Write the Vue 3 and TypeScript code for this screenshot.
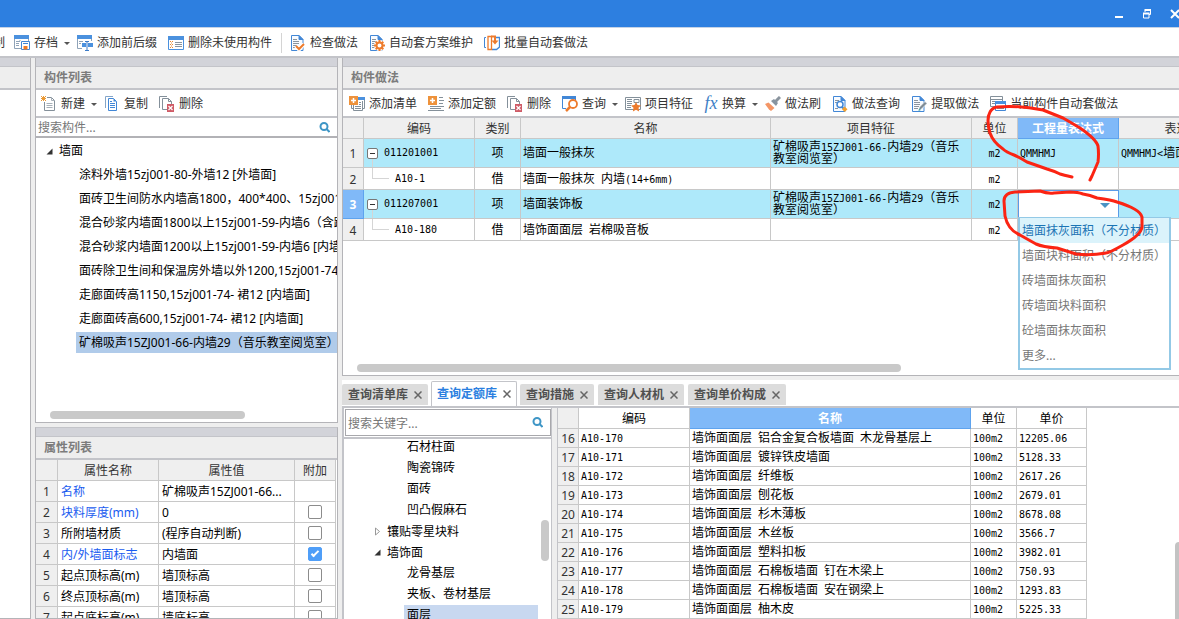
<script setup lang="ts">
import { ref } from 'vue'

interface Tool {
  label: string
  icon: string
  menu?: boolean
}

const docBlue = '<path d="M1.500 .5h7.500l4 4v11h-11.500z" fill="#f8fbff" stroke="#4287d6"/><path d="M9 .5v4h4z" fill="#4287d6" stroke="#4287d6"/>'
const docLines = '<path d="M3 4.500h4M3 6.500h6M3 8.500h6M3 10.500h5M3 12.500h4" stroke="#8a949e" fill="none"/>'
const plusBox = '<path d="M0 0h9v9h-9z" fill="#ee923b"/><path d="M4.500 2v5M2 4.500h5" stroke="#fff" stroke-width="1.500"/>'
const deleteDocs = '<path d="M.5 12V.5H8M3.500 13.500v-11h6l3 3v8z" fill="#fff" stroke="#84909a"/><path d="M9.500 2.500v3h3" fill="none" stroke="#84909a"/><path d="M8 8h7v8H8z" fill="#cf5b66"/><path d="M9.500 10l4 4M13.500 10l-4 4" stroke="#fff" stroke-width="1.200"/>'

const icons: Record<string, string> = {
  archive:
    '<path d="M0 0h15v4H0z" fill="#4b91de"/><path d="M.5 4v9.500H7M14.500 4v2M2 6.500h4M2 8.500h3M2 10.500h3M6 5v1" fill="none" stroke="#8fa3b8"/><path d="M7.500 6.500h8v8h-8z" fill="#fff" stroke="#4287d6"/><path d="M9 8.500h5" stroke="#4287d6"/><path d="M9.500 11h4v3.500h-4z" fill="#f07a24"/>',
  prefix:
    '<path d="M0 0h15v4H0z" fill="#4b91de"/><path d="M.5 4v9.500H5M14.500 4v2M2 6.500h4M2 8.500h2" fill="none" stroke="#8fa3b8"/><path d="M5 8h4v4H5zM11 8h5v4h-5z" fill="#4b91de"/><path d="M8 6.500h4M10 6.500v9M8 15.500h4" fill="none" stroke="#3c7bc8"/>',
  unused:
    '<path d="M.5 1.500h15v13H.5z" fill="#fff" stroke="#4b91de"/><path d="M0 1h16v4H0z" fill="#4b91de"/><path d="M2 6h1v1H2zM4 6h1v1H4zM3 7.500h1v1H3zM2 9h1v1H2zM4 9h1v1H4zM3 10.500h1v1H3zM2 12h1v1H2zM4 12h1v1H4z" fill="#ee8a2d"/><path d="M7 7.500h7M7 9.500h7M7 11.500h7" stroke="#8a949e"/>',
  check: docBlue + docLines + '<path d="M6 11l3 3.500 5-5.500" fill="none" stroke="#fff" stroke-width="4"/><path d="M6 11l3 3 5-5" fill="none" stroke="#ed7b2c" stroke-width="2"/>',
  gear: docBlue + docLines + '<circle cx="10.500" cy="10.500" r="5.500" fill="#fff"/><circle cx="10.500" cy="10.500" r="3" fill="#fff" stroke="#ed7b2c" stroke-width="2"/><path d="M10.500 5v2M10.500 14v2M5 10.500h2M14 10.500h2M6.700 6.700l1.300 1.300M13 13l1.300 1.300M6.700 14.300L8 13M13 8l1.300-1.300" stroke="#ed7b2c" stroke-width="2"/>',
  batch:
    '<path d="M2 2.500H.5v10H2" fill="none" stroke="#4287d6"/><path d="M11 2.500h4.500v9.500l-3 2.500H8" fill="none" stroke="#4287d6" stroke-width="1.300"/><path d="M4 1.500h3.500v13H4z" fill="#fff" stroke="#ed7b2c" stroke-width="1.300"/><path d="M7 1.500h4V6" fill="none" stroke="#ed7b2c" stroke-width="2"/><path d="M7.500 5.500h7l-3.500 4z" fill="#ed7b2c"/>',
  create:
    '<path d="M3.500 1.500h7l3 3v10h-10z" fill="#fff" stroke="#84909a"/><path d="M10.500 1.500v3h3M5.500 7.500h6M5.500 9.500h6M5.500 11.500h6" fill="none" stroke="#a7b0b8"/><path d="M0 0h6v6H0z" fill="#fff"/><path d="M0 0l5 5M5 0L0 5M2.500 0v5M0 2.500h5" stroke="#eb9a35"/>',
  copy:
    '<path d="M1.500 12V.5H9" fill="none" stroke="#84a5c8"/><path d="M4.500 2.500h5l3 3v9h-8z" fill="#fff" stroke="#4287d6"/><path d="M9.500 2.500v3h3z" fill="#4287d6"/><path d="M6 5.500h2M6 7.500h5M6 9.500h5M6 11.500h5" fill="none" stroke="#4287d6"/>',
  remove: deleteDocs,
  addList:
    '<path d="M9 1h7v3H9z" fill="#4b91de"/><path d="M15.500 4v8.500h-2M13.500 5v9.500H4.500V9M2.500 9v3.500h2M6 10.500h6M6 12.500h6M10 6.500h2M10 8.500h2" fill="none" stroke="#84909a"/>' + plusBox,
  addQuota: '<path d="M11 1.500h4M11 4.500h5M11 7.500h4M2 10.500h14M2 12.500h11M0 14.500h16" stroke="#84909a"/>' + plusBox,
  search:
    '<path d="M.5 2v10.500H4M.5 2h13v4" fill="none" stroke="#4287d6"/><path d="M0 0h14v3H0z" fill="#4287d6"/><circle cx="11" cy="8" r="4" fill="#fff" stroke="#ed7b2c" stroke-width="1.800"/><path d="M8 11l-4 4" stroke="#ed7b2c" stroke-width="2.500"/>',
  feature:
    '<path d="M.5 1.500h15v12H.5z" fill="#fff" stroke="#84909a"/><path d="M2 3.500h5M2 5.500h5M2 7.500h5M2 9.500h4M2 11.500h4M9 3.500h5v3H9z" fill="none" stroke="#84909a"/><path d="M11 6l1.500 3 3.500.4-2.500 2.300.6 3.800-3.100-1.700-3.100 1.700.6-3.800L6 9.400 9.500 9z" fill="#ed7b2c"/>',
  brush:
    '<path d="M15 1l-5 5" stroke="#8a949e" stroke-width="3"/><path d="M6 5l3-2 4 4-2 3z" fill="#8794a0"/><path d="M5 5.500l5.500 5.500-1.500 1-5.500-5z" fill="#fff"/><path d="M3.500 6.500l6 5.500-3.500 3-2-1.500L0 8z" fill="#f49666"/>',
  docQuery:
    docBlue + '<path d="M3 4.500h4M3 6.500h2M3 12.500h3" stroke="#8a949e"/><circle cx="8" cy="8.500" r="3" fill="#fff" stroke="#4287d6" stroke-width="1.500"/><path d="M10 11l2 2" stroke="#4287d6" stroke-width="2"/><path d="M12.500 10.500l3 2.700-2.700 2.800-2.800-2.800z" fill="#f4a02c"/>',
  extract:
    docBlue + docLines + '<path d="M7.500 14.500l1-3.500 5.500-5.500 2 2L10.500 13z" fill="#7e8b95" stroke="#fff" stroke-width=".6"/><path d="M7.500 15l.7-2.500 1.800 1.600z" fill="#41a7a5"/>',
  auto:
    '<path d="M.5 .5h12v10H.5zM.5 3.500h12" fill="#fff" stroke="#84909a"/><path d="M2 5.500h4M2 7.500h3" stroke="#84909a"/><path d="M5.500 5.500h10v9h-10z" fill="#fff" stroke="#4287d6"/><path d="M5 5h11v3H5z" fill="#4b91de"/><path d="M7 10.500h7M7 12.500h7" stroke="#84909a"/>',
}

const mainTools: Tool[] = [
  { label: '存档', icon: 'archive', menu: true },
  { label: '添加前后缀', icon: 'prefix' },
  { label: '删除未使用构件', icon: 'unused' },
]
const schemeTools: Tool[] = [
  { label: '检查做法', icon: 'check' },
  { label: '自动套方案维护', icon: 'gear' },
  { label: '批量自动套做法', icon: 'batch' },
]
const listTools: Tool[] = [
  { label: '新建', icon: 'create', menu: true },
  { label: '复制', icon: 'copy' },
  { label: '删除', icon: 'remove' },
]
const methodTools: Tool[] = [
  { label: '添加清单', icon: 'addList' },
  { label: '添加定额', icon: 'addQuota' },
  { label: '删除', icon: 'remove' },
  { label: '查询', icon: 'search', menu: true },
  { label: '项目特征', icon: 'feature' },
  { label: '换算', icon: 'fx', menu: true },
  { label: '做法刷', icon: 'brush' },
  { label: '做法查询', icon: 'docQuery' },
  { label: '提取做法', icon: 'extract' },
  { label: '当前构件自动套做法', icon: 'auto' },
]

const components = [
  '涂料外墙15zj001-80-外墙12 [外墙面]',
  '面砖卫生间防水内墙高1800，400*400、15zj001-59-内墙',
  '混合砂浆内墙面1800以上15zj001-59-内墙6（含踢脚）',
  '混合砂浆内墙面1200以上15zj001-59-内墙6 [内墙面]',
  '面砖除卫生间和保温房外墙以外1200,15zj001-74-内墙',
  '走廊面砖高1150,15zj001-74- 裙12 [内墙面]',
  '走廊面砖高600,15zj001-74- 裙12 [内墙面]',
  '矿棉吸声15ZJ001-66-内墙29（音乐教室阅览室）',
]
const selectedComponent = ref(7)

interface Property {
  name: string
  value: string
  key?: boolean
  extra?: boolean
}
const properties = ref<Property[]>([
  { name: '名称', value: '矿棉吸声15ZJ001-66...', key: true },
  { name: '块料厚度(mm)', value: '0', key: true, extra: false },
  { name: '所附墙材质', value: '(程序自动判断)', extra: false },
  { name: '内/外墙面标志', value: '内墙面', key: true, extra: true },
  { name: '起点顶标高(m)', value: '墙顶标高', extra: false },
  { name: '终点顶标高(m)', value: '墙顶标高', extra: false },
  { name: '起点底标高(m)', value: '墙底标高', extra: false },
])

const methods = [
  { code: '011201001', parent: true, type: '项', name: '墙面一般抹灰', feature: '矿棉吸声15ZJ001-66-内墙29（音乐教室阅览室）', expr: 'QMMHMJ', note: 'QMMHMJ<墙面抹灰面积（不分材质）>' },
  { code: 'A10-1', parent: false, type: '借', name: '墙面一般抹灰 内墙(14+6mm)', feature: '', expr: '', note: '' },
  { code: '011207001', parent: true, type: '项', name: '墙面装饰板', feature: '矿棉吸声15ZJ001-66-内墙29（音乐教室阅览室）', expr: '', note: '' },
  { code: 'A10-180', parent: false, type: '借', name: '墙饰面面层 岩棉吸音板', feature: '', expr: '', note: '' },
]
const editingRow = 2
const expressions = ['墙面抹灰面积（不分材质）', '墙面块料面积（不分材质）', '砖墙面抹灰面积', '砖墙面块料面积', '砼墙面抹灰面积', '更多...']
const activeExpression = ref(0)

const tabs = ['查询清单库', '查询定额库', '查询措施', '查询人材机', '查询单价构成']
const activeTab = ref(1)

const library = [
  { label: '石材柱面', level: 2 },
  { label: '陶瓷锦砖', level: 2 },
  { label: '面砖', level: 2 },
  { label: '凹凸假麻石', level: 2 },
  { label: '镶贴零星块料', level: 1, open: false },
  { label: '墙饰面', level: 1, open: true },
  { label: '龙骨基层', level: 2 },
  { label: '夹板、卷材基层', level: 2 },
  { label: '面层', level: 2 },
]
const selectedLibrary = ref(8)

const quotas: [string, string, string][] = [
  ['A10-170', '墙饰面面层 铝合金复合板墙面 木龙骨基层上', '12205.06'],
  ['A10-171', '墙饰面面层 镀锌铁皮墙面', '5128.33'],
  ['A10-172', '墙饰面面层 纤维板', '2617.26'],
  ['A10-173', '墙饰面面层 刨花板', '2679.01'],
  ['A10-174', '墙饰面面层 杉木薄板', '8678.08'],
  ['A10-175', '墙饰面面层 木丝板', '3566.7'],
  ['A10-176', '墙饰面面层 塑料扣板', '3982.01'],
  ['A10-177', '墙饰面面层 石棉板墙面 钉在木梁上', '750.93'],
  ['A10-178', '墙饰面面层 石棉板墙面 安在钢梁上', '1293.83'],
  ['A10-179', '墙饰面面层 柚木皮', '5225.33'],
]

// Splits a string into Latin and Chinese runs, so that Latin text takes half-width cells.
function runs(text: string): { text: string; latin: boolean }[] {
  return (text.match(/[\x20-\x7e]+|[^\x20-\x7e]+/g) ?? []).map((part) => ({
    text: part,
    latin: /^[\x20-\x7e]/.test(part),
  }))
}
</script>

<template>
  <div class="app">
    <header class="titlebar">
      <button type="button" class="win" aria-label="最小化">
        <svg width="10" height="10"><path d="M1 8h8" stroke="#fff" stroke-width="2" /></svg>
      </button>
      <button type="button" class="win" aria-label="还原">
        <svg width="10" height="10"><path d="M3 3V1.500h5.500v4H7M1.500 4.500H7v4.500H1.500z" fill="none" stroke="#fff" /><path d="M2.500 1h6.500M1 4.500h6.500" stroke="#fff" stroke-width="2" /></svg>
      </button>
      <button type="button" class="win" aria-label="关闭">
        <svg width="10" height="10"><path d="M1 1l8 8M9 1L1 9" stroke="#fff" stroke-width="2" /></svg>
      </button>
    </header>

    <nav class="toolbar main-toolbar">
      <button type="button" class="tool cut">复制</button>
      <button v-for="t in mainTools" :key="t.label" type="button" class="tool" :class="{ menu: t.menu }">
        <svg class="icon" viewBox="0 0 16 16" v-html="icons[t.icon]"></svg>{{ t.label }}<i v-if="t.menu" class="caret"></i>
      </button>
      <span class="separator"></span>
      <button v-for="t in schemeTools" :key="t.label" type="button" class="tool">
        <svg class="icon" viewBox="0 0 16 16" v-html="icons[t.icon]"></svg>{{ t.label }}
      </button>
    </nav>

    <main class="workspace">
      <section class="panel edge">
        <div class="strip"></div>
        <div class="panel-title"></div>
      </section>

      <div class="column">
        <section class="panel grow">
          <div class="strip"></div>
          <h2 class="panel-title">构件列表</h2>
          <div class="toolbar">
            <button v-for="t in listTools" :key="t.label" type="button" class="tool" :class="{ menu: t.menu }">
              <svg class="icon" viewBox="0 0 16 16" v-html="icons[t.icon]"></svg>{{ t.label }}<i v-if="t.menu" class="caret"></i>
            </button>
          </div>
          <label class="search">
            <input type="text" placeholder="搜索构件..." aria-label="搜索构件" />
            <svg class="lens" viewBox="0 0 11 11"><circle cx="5" cy="4.500" r="3.500" /><path d="M7.500 7l3 3" /></svg>
          </label>
          <div class="tree">
            <div class="tree-root"><svg class="twisty" viewBox="0 0 7 7"><path d="M6.500 .5v6h-6z" fill="#333" /></svg>墙面</div>
            <ul>
              <li v-for="(c, i) in components" :key="c" :class="{ selected: i === selectedComponent }" @click="selectedComponent = i">{{ c }}</li>
            </ul>
          </div>
          <div class="hscroll list-scroll"><span></span></div>
        </section>

        <section class="panel properties">
          <div class="strip"></div>
          <h2 class="panel-title">属性列表</h2>
          <table class="grid prop-grid">
            <colgroup><col class="p-no" /><col class="p-name" /><col /><col class="p-add" /></colgroup>
            <thead>
              <tr><th></th><th>属性名称</th><th>属性值</th><th>附加</th></tr>
            </thead>
            <tbody>
              <tr v-for="(p, i) in properties" :key="p.name">
                <th>{{ i + 1 }}</th>
                <td :class="{ key: p.key }">{{ p.name }}</td>
                <td>{{ p.value }}</td>
                <td class="center"><input v-if="p.extra !== undefined" v-model="p.extra" type="checkbox" :aria-label="p.name + ' 附加'" /></td>
              </tr>
            </tbody>
          </table>
        </section>
      </div>

      <div class="column right">
        <section class="panel grow">
          <div class="strip"></div>
          <h2 class="panel-title">构件做法</h2>
          <div class="toolbar method-toolbar">
            <button v-for="t in methodTools" :key="t.label" type="button" class="tool" :class="{ menu: t.menu }">
              <span v-if="t.icon === 'fx'" class="icon fx" aria-hidden="true">fx</span>
              <svg v-else class="icon" viewBox="0 0 16 16" v-html="icons[t.icon]"></svg>{{ t.label }}<i v-if="t.menu" class="caret"></i>
            </button>
          </div>
          <div class="grid-area">
            <table class="grid method-grid">
              <colgroup>
                <col class="m-no" /><col class="m-code" /><col class="m-unit" /><col class="m-name" /><col class="m-feature" /><col class="m-unit" /><col class="m-expr" /><col class="m-note" />
              </colgroup>
              <thead>
                <tr><th></th><th>编码</th><th>类别</th><th>名称</th><th>项目特征</th><th>单位</th><th class="current">工程量表达式</th><th>表达式说明</th></tr>
              </thead>
              <tbody>
                <tr v-for="(m, i) in methods" :key="m.code" :class="{ parent: m.parent }">
                  <th :class="{ current: i === editingRow }">{{ i + 1 }}</th>
                  <td class="code">
                    <div class="node">
                      <button v-if="m.parent" type="button" class="toggle" aria-label="折叠"></button>
                      <span v-else class="elbow"></span>
                      <span class="latin">{{ m.code }}</span>
                    </div>
                  </td>
                  <td class="center">{{ m.type }}</td>
                  <td><span v-for="(r, k) in runs(m.name)" :key="k" :class="{ latin: r.latin }">{{ r.text }}</span></td>
                  <td class="feature"><span v-for="(r, k) in runs(m.feature)" :key="k" :class="{ latin: r.latin }">{{ r.text }}</span></td>
                  <td class="center"><span class="latin">m2</span></td>
                  <td v-if="i === editingRow" class="editor">
                    <select aria-label="工程量表达式"><option></option></select>
                    <ul class="popup" role="listbox" aria-label="工程量表达式选项">
                      <li v-for="(e, k) in expressions" :key="e" role="option" :aria-selected="k === activeExpression" :class="{ active: k === activeExpression }" @mouseenter="activeExpression = k">{{ e }}</li>
                    </ul>
                  </td>
                  <td v-else><span class="latin">{{ m.expr }}</span></td>
                  <td><span v-for="(r, k) in runs(m.note)" :key="k" :class="{ latin: r.latin }">{{ r.text }}</span></td>
                </tr>
              </tbody>
            </table>
          </div>
          <div class="hscroll method-scroll"><span></span></div>
        </section>

        <section class="query">
          <div class="tabs" role="tablist">
            <div v-for="(t, i) in tabs" :key="t" class="tab" :class="{ active: i === activeTab }">
              <button type="button" role="tab" :aria-selected="i === activeTab" @click="activeTab = i">{{ t }}</button>
              <button type="button" class="close" aria-label="关闭标签"><svg viewBox="0 0 8 8"><path d="M.5 .5l7 7M7.500 .5l-7 7" /></svg></button>
            </div>
          </div>
          <div class="query-body">
            <div class="library">
              <label class="search boxed">
                <input type="text" placeholder="搜索关键字..." aria-label="搜索关键字" />
                <svg class="lens" viewBox="0 0 11 11"><circle cx="5" cy="4.500" r="3.500" /><path d="M7.500 7l3 3" /></svg>
              </label>
              <div class="library-body">
                <ul>
                  <li v-for="(n, i) in library" :key="n.label" :class="{ branch: n.level === 1, selected: i === selectedLibrary }" @click="selectedLibrary = i">
                    <svg v-if="n.level === 1" class="twisty" viewBox="0 0 7 9"><path v-if="n.open" d="M6.500 1.500v6h-6z" fill="#333" /><path v-else d="M1.500 1l4 3.500-4 3.500z" fill="#fff" stroke="#999" /></svg>{{ n.label }}
                  </li>
                </ul>
                <div class="vscroll"><span></span></div>
              </div>
            </div>
            <div class="results">
              <table class="grid quota-grid">
                <colgroup><col class="q-no" /><col class="q-code" /><col class="q-name" /><col class="q-unit" /><col class="q-price" /></colgroup>
                <thead>
                  <tr><th></th><th>编码</th><th class="current">名称</th><th>单位</th><th>单价</th></tr>
                </thead>
                <tbody>
                  <tr v-for="(q, i) in quotas" :key="q[0]">
                    <th>{{ i + 16 }}</th>
                    <td><span class="latin">{{ q[0] }}</span></td>
                    <td><span v-for="(r, k) in runs(q[1])" :key="k" :class="{ latin: r.latin }">{{ r.text }}</span></td>
                    <td><span class="latin">100m2</span></td>
                    <td><span class="latin">{{ q[2] }}</span></td>
                  </tr>
                </tbody>
              </table>
              <div class="page-scroll"></div>
            </div>
          </div>
        </section>
      </div>
    </main>

    <svg class="ink" viewBox="980 100 170 160" aria-hidden="true">
      <path d="M1072 177Q1063 175 1060 174Q1054 171 1047 169L1027 162Q1019 157 1014 155Q1006 152 1003 149Q993 142 990 133Q986 119 990 112Q992 108 997 107Q1018 105 1043 110Q1053 114 1063 118Q1070 122 1080 128Q1096 139 1098 146Q1099 154 1098 162L1092 176L1090 180" />
      <path d="M1004 201Q1004 193 1015 192L1040 191Q1048 194 1054 193L1070 192Q1078 192 1083 194Q1090 195 1097 198Q1112 200 1117 202Q1140 209 1142 217V227Q1141 235 1123 245Q1109 253 1106 253Q1090 256 1076 254L1057 248Q1043 247 1036 244L1020 235Q1008 230 1005 216Z" />
    </svg>
  </div>
</template>

<style>
body {
  overflow: hidden;
}
</style>

<style scoped>
.app {
  position: relative;
  display: flex;
  flex-direction: column;
  height: 100vh;
  overflow: hidden;
  background: #eee;
  color: #000;
  font: 12px/16px "Noto Sans", "Noto Sans CJK SC", sans-serif;
}
.app *,
.app *::after {
  box-sizing: border-box;
}
button,
input,
select {
  font: inherit;
  color: inherit;
  border: 0;
  padding: 0;
  margin: 0;
  background: none;
}
ul,
h2 {
  list-style: none;
  margin: 0;
  padding: 0;
}
.titlebar {
  flex: none;
  display: flex;
  justify-content: flex-end;
  height: 28px;
  background: #2d7fe0;
  border-bottom: 1px solid #c5d3e6;
}
.win {
  width: 28px;
  flex: none;
}
.win:last-child {
  margin-right: -10px;
}
.win svg {
  display: block;
  margin: auto;
}
.toolbar {
  flex: none;
  display: flex;
  align-items: center;
  gap: 1px;
  height: 28px;
  padding-top: 2px;
  background: #fff;
  border-bottom: 2px solid #c3c4c9;
  overflow: hidden;
}
.main-toolbar {
  height: 30px;
}
.method-toolbar {
  padding-left: 1px;
}
.tool {
  flex: none;
  display: flex;
  align-items: center;
  gap: 4px;
  height: 22px;
  padding: 0 5px;
  color: #333;
  white-space: nowrap;
}
.tool.menu {
  padding-right: 1px;
}
.tool.cut {
  width: 8px;
  padding: 0 3px 0 0;
  justify-content: flex-end;
}
.icon {
  flex: none;
  width: 16px;
  height: 16px;
}
.fx {
  width: 14px;
  color: #3f7fc6;
  font: italic 18px/14px "Liberation Serif", serif;
}
.caret {
  margin-left: 2px;
  border: 3px solid transparent;
  border-top-color: #555;
  border-bottom: 0;
}
.separator {
  width: 1px;
  height: 20px;
  margin: 0 2px 0 3px;
  background: #d4d4d4;
}
.workspace {
  flex: 1;
  min-height: 0;
  display: grid;
  grid-template-columns: 31px 303px minmax(0, 1fr);
  grid-template-rows: minmax(0, 1fr);
  gap: 4px;
}
.column {
  display: flex;
  flex-direction: column;
  gap: 4px;
  min-height: 0;
}
.panel {
  display: flex;
  flex-direction: column;
  min-height: 0;
  background: #fff;
  border: 1px solid #b4b4b8;
  border-top: 0;
}
.edge {
  border-left: 0;
}
.right .panel {
  border-right: 0;
}
.grow {
  flex: 1;
}
.strip {
  flex: none;
  height: 9px;
  background: #d2d3d9;
  border-bottom: 1px solid #c3c4c9;
}
.panel-title {
  flex: none;
  height: 23px;
  padding-left: 8px;
  background: #eee;
  border-bottom: 2px solid #c3c4c9;
  color: #7c7c7c;
  font-size: 12px;
  line-height: 22px;
}
.search {
  flex: none;
  display: flex;
  align-items: center;
  height: 20px;
  padding: 0 7px 0 2px;
  border-bottom: 2px solid #b2b2b6;
}
.search input {
  flex: 1;
  min-width: 0;
  padding-top: 2px;
  outline: 0;
}
.search input::placeholder {
  color: #777;
  opacity: 1;
}
.lens {
  width: 11px;
  height: 11px;
  fill: none;
  stroke: #3f96c6;
  stroke-width: 2;
}
.tree {
  flex: 1;
  min-height: 0;
  overflow: hidden;
}
.tree-root {
  display: flex;
  align-items: center;
  height: 24px;
  padding: 2px 0 0 10px;
  gap: 6px;
}
.twisty {
  flex: none;
  width: 7px;
  height: 9px;
}
.tree li {
  height: 21px;
  margin: 2px 0 3px 40px;
  padding-left: 3px;
  line-height: 22px;
  white-space: nowrap;
  overflow: hidden;
}
.tree li.selected {
  background: #b0cbea;
}
.hscroll {
  flex: none;
  height: 11px;
}
.hscroll span {
  display: block;
  height: 8px;
  border-radius: 4px;
  background: #c9c9c9;
}
.list-scroll {
  padding: 0 92px 0 14px;
}
.method-scroll {
  padding: 0 278px 0 14px;
}
.properties {
  flex: none;
  height: 192px;
  overflow: hidden;
  border-top: 1px solid #c3c4c9;
}
.grid {
  table-layout: fixed;
  border-collapse: separate;
  border-spacing: 0;
}
.grid th,
.grid td {
  padding: 0;
  border: solid #c8c8c8;
  border-width: 0 1px 1px 0;
  white-space: nowrap;
  overflow: hidden;
  line-height: 14px;
}
.grid td {
  padding-left: 2px;
}
.grid th {
  padding-top: 2px;
  background: #efefef;
  color: #333;
  font-weight: 400;
  text-align: center;
}
.grid th.current {
  background: #80b9f8;
  border-color: #5ea3ee;
  color: #fff;
  font-weight: 700;
}
.grid .center {
  padding-left: 0;
  text-align: center;
}
.prop-grid {
  width: 100%;
  padding-right: 1px;
}
.p-no { width: 22px; }
.p-name { width: 101px; }
.p-add { width: 41px; }
.prop-grid tr {
  height: 21px;
}
.prop-grid td {
  padding-left: 3px;
}
.prop-grid td:not(.center) {
  padding-top: 2px;
}
.prop-grid .key {
  color: #1a5cf0;
}
.prop-grid input {
  appearance: none;
  display: block;
  width: 14px;
  height: 14px;
  margin: 0 auto;
  border: 1px solid #8c8c8c;
  border-radius: 2px;
}
.prop-grid input:checked {
  position: relative;
  border-color: #4f9ef8;
  background: #4f9ef8;
}
.prop-grid input:checked::after {
  content: "";
  position: absolute;
  left: 4px;
  top: 1px;
  width: 4px;
  height: 8px;
  border: solid #fff;
  border-width: 0 2px 2px 0;
  transform: rotate(45deg);
}
.latin {
  font-family: "DejaVu Sans Mono", monospace;
  font-size: 10px;
  line-height: 8px;
  white-space: pre;
}
.grid-area {
  flex: 1;
  min-height: 0;
  overflow-x: clip;
  overflow-y: visible;
}
.method-grid {
  width: 928px;
}
.m-no { width: 21px; }
.m-code { width: 111px; }
.m-unit { width: 46px; }
.m-name { width: 250px; }
.m-feature { width: 201px; }
.m-expr { width: 101px; }
.m-note { width: 152px; }
.method-grid thead tr {
  height: 21px;
}
.method-grid tbody tr {
  height: 22px;
}
.method-grid tbody tr.parent {
  height: 29px;
}
.method-grid .parent td {
  background: #aee9fa;
}
.method-grid .feature {
  padding-right: 8px;
  line-height: 12px;
  white-space: normal;
  word-break: break-all;
}
.node {
  display: flex;
  align-items: center;
  height: 21px;
  padding-left: 1px;
  gap: 6px;
}
.toggle {
  position: relative;
  width: 11px;
  height: 11px;
  border: 1px solid #777;
  border-radius: 2px;
  background: linear-gradient(#333, #333) center / 5px 1px no-repeat #fff;
}
.toggle::after {
  content: "";
  position: absolute;
  left: 4px;
  top: 10px;
  width: 1px;
  height: 9px;
  background: #d5d5d5;
}
.elbow {
  align-self: flex-start;
  width: 17px;
  height: 11px;
  margin-left: 5px;
  border: solid #d5d5d5;
  border-width: 0 0 1px 1px;
}
.method-grid .parent .editor {
  position: relative;
  padding: 0;
  overflow: visible;
  background: #fff;
  border: 1px solid #5a9be8;
}
.editor select {
  appearance: none;
  display: block;
  width: 100%;
  height: 26px;
  outline: 0;
}
.editor::after {
  content: "";
  position: absolute;
  right: 8px;
  top: 12px;
  border: 5px solid transparent;
  border-top-color: #4a93c4;
  border-bottom: 0;
  pointer-events: none;
}
.popup {
  position: absolute;
  z-index: 2;
  top: 26px;
  left: -1px;
  width: 153px;
  border: 2px solid #93c9e6;
  border-top-width: 1px;
  background: #fff;
}
.popup li {
  height: 25px;
  padding-left: 2px;
  line-height: 25px;
  color: #777;
  overflow: hidden;
}
.popup li.active {
  background: #dbf3fb;
  color: #1b74b4;
}
.query {
  flex: none;
  display: flex;
  flex-direction: column;
  height: 239px;
}
.tabs {
  flex: none;
  display: flex;
  align-items: flex-end;
  gap: 4px;
  height: 28px;
  background: #fff;
  border-bottom: 2px solid #c3c4c9;
}
.tab {
  display: flex;
  align-items: center;
  gap: 6px;
  height: 21px;
  margin-bottom: 1px;
  padding: 1px 6px 0;
  background: #dcdcdc;
  border-radius: 2px 2px 0 0;
  color: #505050;
  font-weight: 700;
}
.tab.active {
  height: 25px;
  margin: 0 -1px;
  padding: 0 5px;
  background: #fff;
  border: 1px solid #c3c4c9;
  border-bottom: 0;
  color: #2b7fe0;
}
.close,
.close svg {
  display: block;
  width: 8px;
  height: 8px;
  stroke: #666;
  stroke-width: 1.5;
}
.query-body {
  flex: 1;
  min-height: 0;
  display: flex;
  gap: 5px;
}
.library {
  flex: none;
  display: flex;
  flex-direction: column;
  width: 210px;
  background: #fff;
  border: solid #c3c4c9;
  border-width: 0 1px 0 2px;
}
.boxed {
  height: 27px;
  margin: 1px 0 1px 1px;
  border: 1px solid #a8a8ac;
}
.library-body {
  flex: 1;
  display: flex;
  min-height: 0;
  border-top: 2px solid #c3c4c9;
  overflow: hidden;
}
.library ul {
  flex: 1;
  margin-top: -2px;
}
.library li {
  height: 21px;
  margin-left: 60px;
  padding-left: 3px;
  line-height: 20px;
}
.library li.branch {
  display: flex;
  align-items: center;
  gap: 6px;
  margin-left: 27px;
}
.library li.selected {
  background: #c8d8f0;
}
.vscroll {
  width: 13px;
  padding: 81px 2px 0 3px;
}
.vscroll span {
  display: block;
  height: 41px;
  border-radius: 4px;
  background: #c9c9c9;
}
.results {
  flex: 1;
  min-width: 0;
  display: flex;
  justify-content: space-between;
  align-items: flex-start;
  background: #fff;
  border-left: 1px solid #c3c4c9;
  overflow: hidden;
}
.quota-grid {
  width: 529px;
  flex: none;
}
.q-no { width: 21px; }
.q-code { width: 111px; }
.q-name { width: 281px; }
.q-unit { width: 46px; }
.q-price { width: 70px; }
.quota-grid thead tr {
  height: 21px;
}
.quota-grid tbody tr {
  height: 19px;
}
.quota-grid thead th:not(.current):not(:first-child) {
  background: #fff;
  color: #000;
}
.page-scroll {
  align-self: flex-end;
  width: 4px;
  height: 77px;
  border-radius: 4px 0 0 0;
  background: #c3c3c3;
}
.ink {
  position: absolute;
  z-index: 3;
  left: 980px;
  top: 100px;
  width: 170px;
  height: 160px;
  fill: none;
  stroke: #fb2413;
  stroke-width: 3;
  stroke-linecap: round;
  stroke-linejoin: round;
  pointer-events: none;
}
</style>
